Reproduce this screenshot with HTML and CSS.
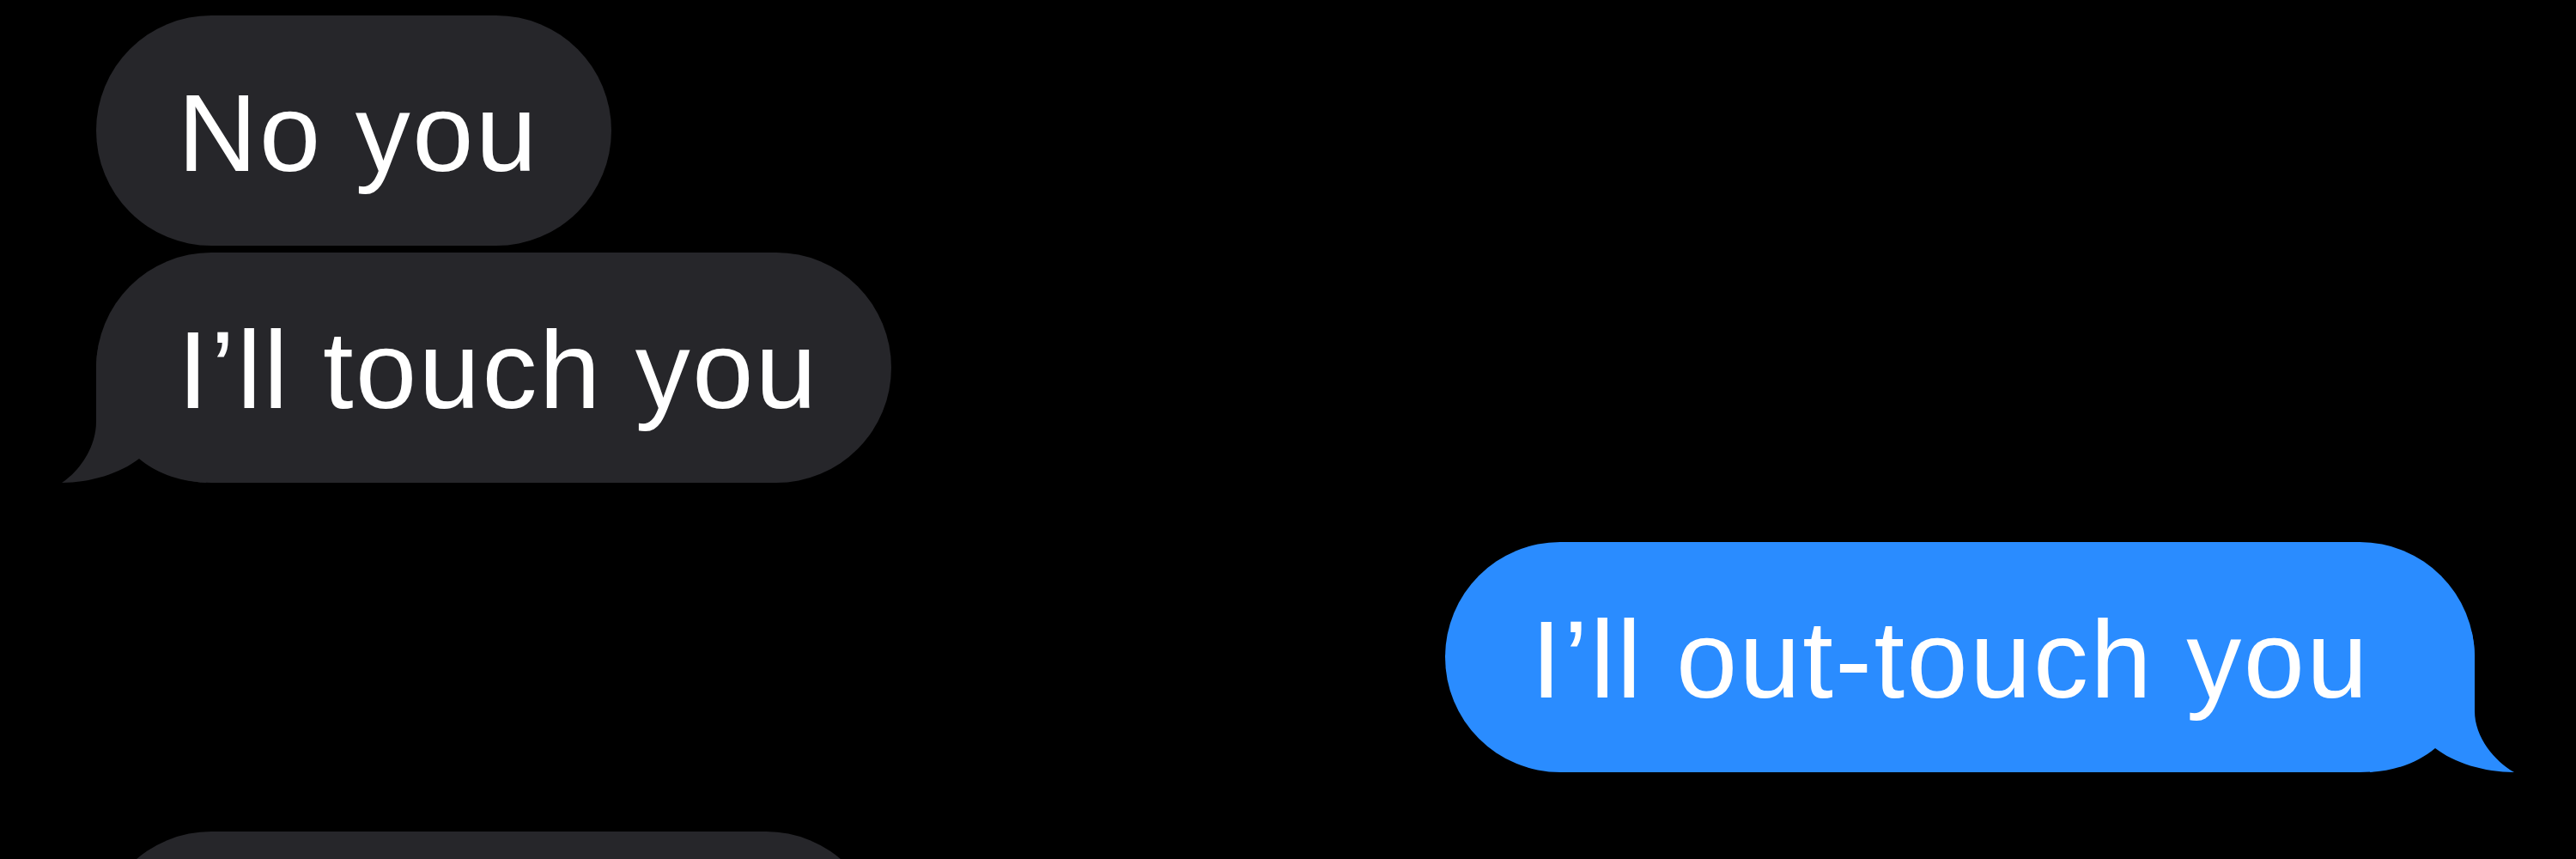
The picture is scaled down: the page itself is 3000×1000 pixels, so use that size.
FILE: index.html
```html
<!DOCTYPE html>
<html lang="en">
<head>
<meta charset="utf-8">
<title>Messages</title>
<link rel="stylesheet" href="styles.css">
</head>
<body>
<main class="thread">
  <div class="row row--in">
    <div class="bubble bubble--in">No you</div>
  </div>
  <div class="row row--in row--tight">
    <div class="bubble bubble--in">I’ll touch you
      <svg class="tail tail--in" viewBox="0 0 168 163" width="168" height="163" aria-hidden="true"><path d="M43.5 0 C41 10 40 20 40 32 L40 92 C40 122 20 150 0 163 C33 163 68 152 90 135 C108 150 133 161 168 163 L168 0 Z"/></svg>
    </div>
  </div>
  <div class="row row--out">
    <div class="bubble bubble--out">I’ll out-touch you
      <svg class="tail tail--out" viewBox="0 0 168 163" width="168" height="163" aria-hidden="true"><path d="M49.5 0 C47 10 46 20 46 32 L46 92 C46 122 23 150 0 163 C35 163 70 152 92 135 C110 150 135 161 168 163 L168 0 Z"/></svg>
    </div>
  </div>
  <div class="row row--in">
    <div class="bubble bubble--in bubble--wide" aria-hidden="true"></div>
  </div>
</main>
</body>
</html>
```

FILE: styles.css
```css
html, body {
  margin: 0;
  padding: 0;
  background: #000;
}
body {
  width: 3000px;
  height: 1000px;
  overflow: hidden;
  font-family: "Liberation Sans", Arial, sans-serif;
}
.thread {
  display: flex;
  flex-direction: column;
  padding: 18px 118px 0 112px;
}
.row {
  display: flex;
  margin-top: 69px;
}
.row:first-child {
  margin-top: 0;
}
.row--tight {
  margin-top: 8px;
}
.row--in {
  justify-content: flex-start;
}
.row--out {
  justify-content: flex-end;
}
.bubble {
  position: relative;
  isolation: isolate;
  box-sizing: border-box;
  height: 268px;
  padding: 6px 84px 0 95px;
  line-height: 262px;
  font-size: 128px;
  letter-spacing: 2.5px;
  color: #fff;
  white-space: nowrap;
  border-radius: 134px;
}
.bubble--in {
  background: #26262a;
  fill: #26262a;
}
.bubble--out {
  background: #2a8cff;
  fill: #2a8cff;
  padding-right: 122px;
  padding-left: 100px;
}
.bubble--wide {
  width: 914px;
}
.tail {
  position: absolute;
  bottom: 0;
  z-index: -1;
  display: block;
}
.tail--in {
  left: -40px;
}
.tail--out {
  right: -46px;
  transform: scaleX(-1);
}
```
